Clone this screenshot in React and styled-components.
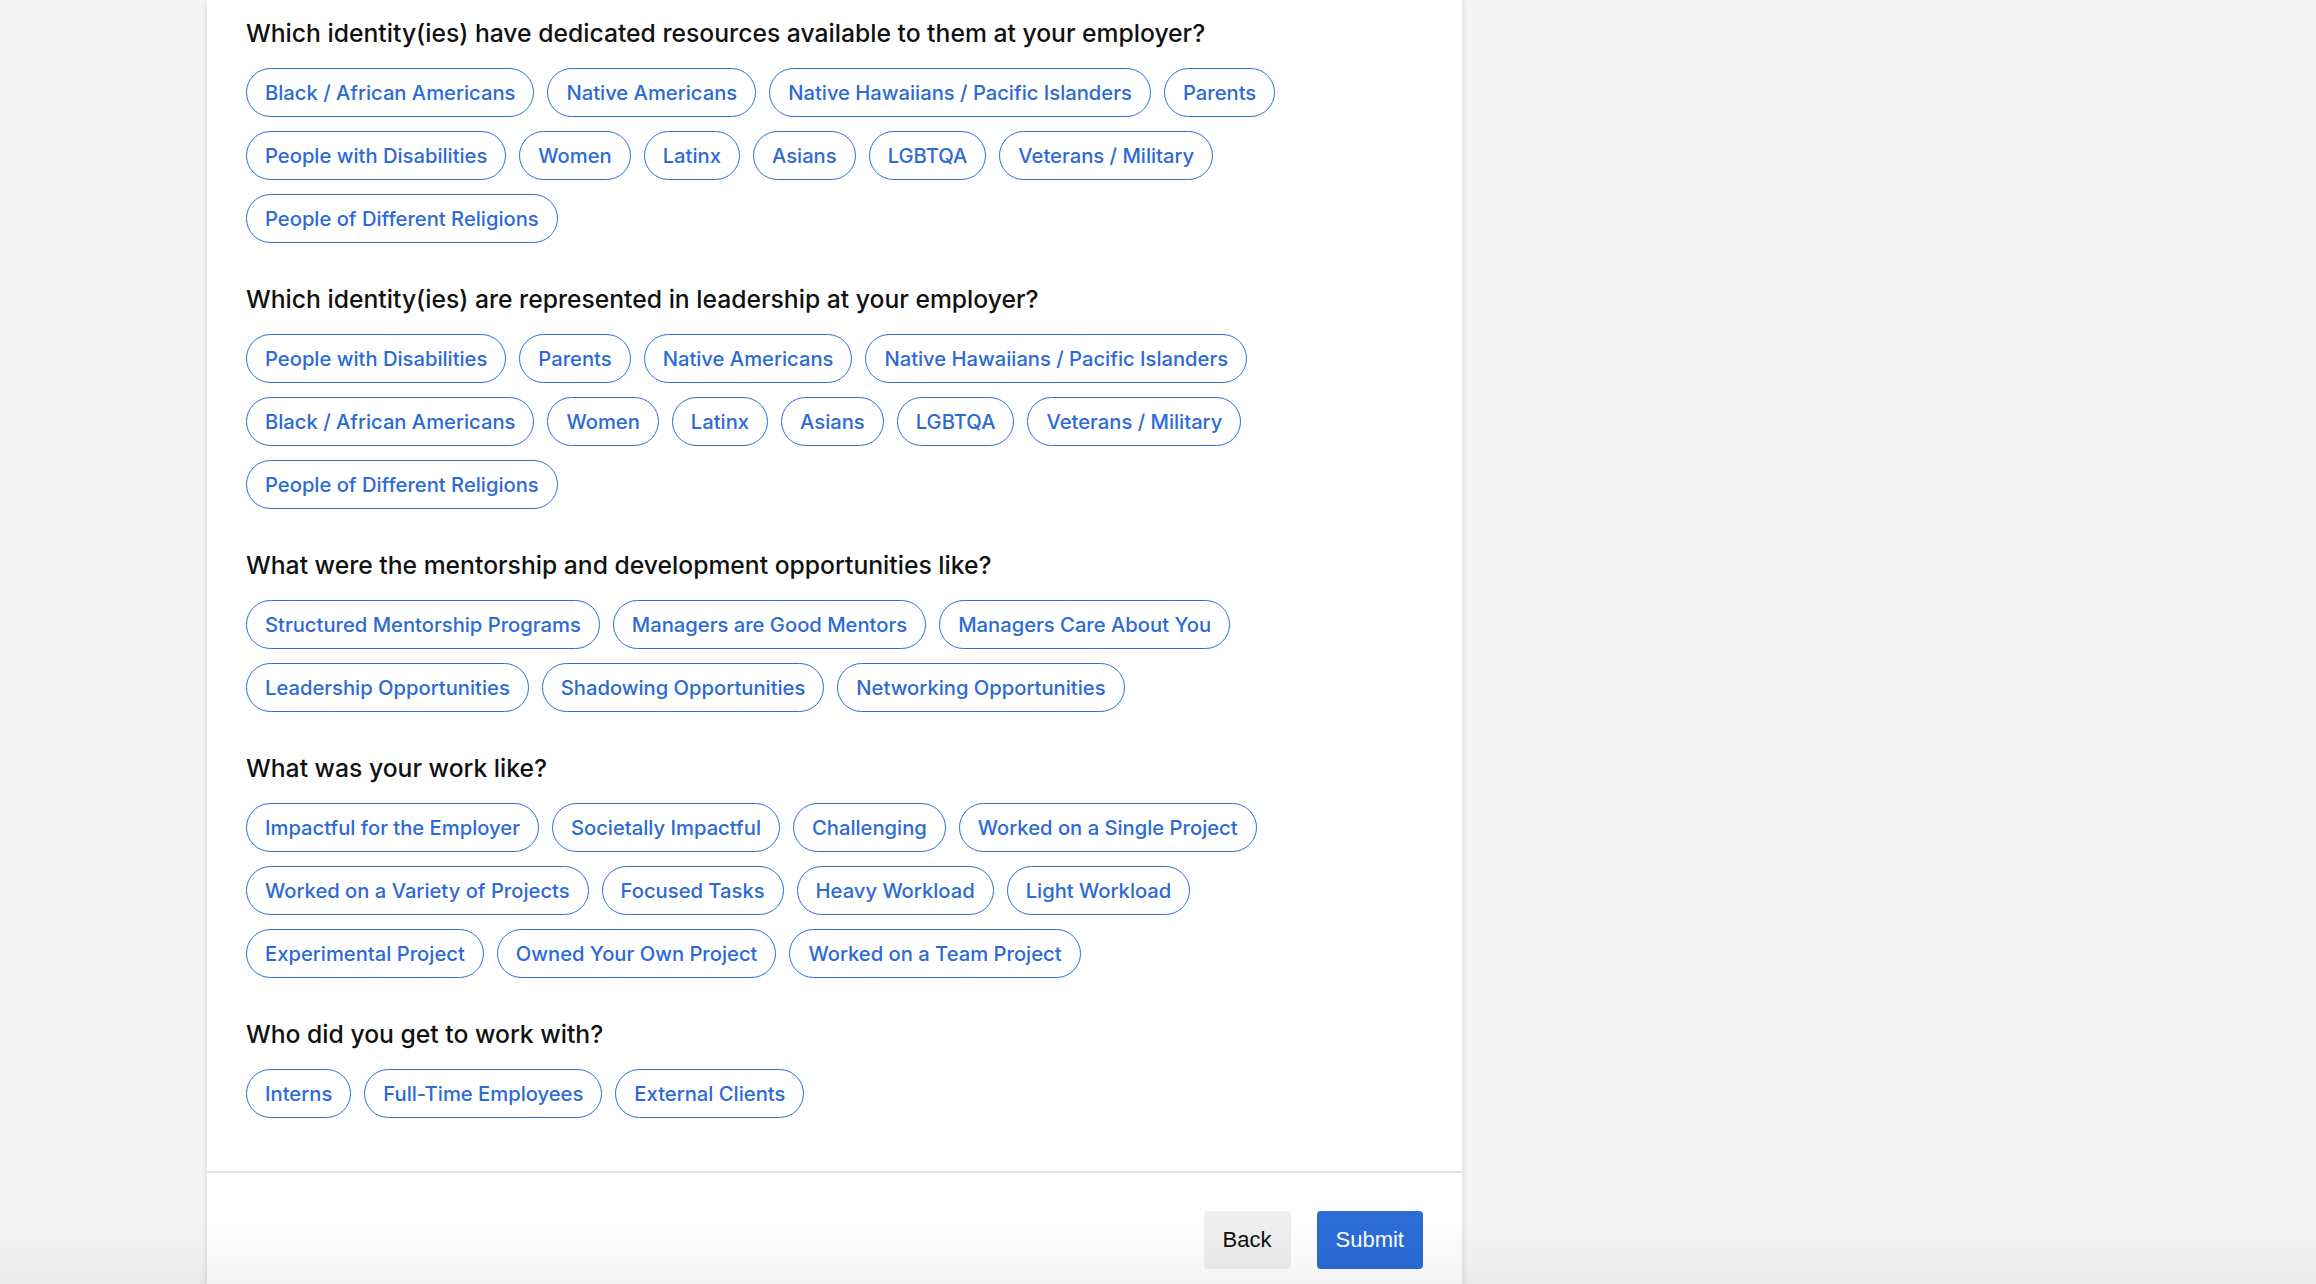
import React from "react";
import styled, { createGlobalStyle } from "styled-components";

const Global = createGlobalStyle`
  html, body { margin: 0; padding: 0; background: #f5f5f5; }
  body { font-family: Inter, "Liberation Sans", Arial, sans-serif; -webkit-font-smoothing: antialiased; }
  * { box-sizing: border-box; }
`;

const Page = styled.div`
  display: flex;
  padding-left: 207px;
  min-height: 100vh;
`;

const Card = styled.div`
  width: 1255px;
  background: #ffffff;
  box-shadow: 0 0 7px rgba(0, 0, 0, 0.13);
  display: flex;
  flex-direction: column;
`;

const Body = styled.div`
  padding: 15px 39px 53px 39px;
  display: flex;
  flex-direction: column;
  gap: 38px;
`;

const Section = styled.section`
  display: flex;
  flex-direction: column;
  gap: 17px;
`;

const Question = styled.h2`
  margin: 0;
  font-family: Inter, "Liberation Sans", Arial, sans-serif;
  font-size: 24.7px;
  line-height: 36px;
  font-weight: 500;
  color: #111111;
`;

const Chips = styled.div`
  display: flex;
  flex-wrap: wrap;
  column-gap: 13px;
  row-gap: 14px;
  max-width: 1170px;
`;

const Chip = styled.button`
  height: 49px;
  padding: 0 18px;
  border: 1px solid #2f6cd8;
  border-radius: 25px;
  background: #ffffff;
  color: #2c6ad6;
  font-family: Inter, "Liberation Sans", Arial, sans-serif;
  font-size: 20.2px;
  font-weight: 500;
  white-space: nowrap;
  cursor: pointer;
`;

const Footer = styled.div`
  border-top: 2px solid #e2e2e2;
  padding: 38px 39px 40px 39px;
  display: flex;
  justify-content: flex-end;
  gap: 26px;
`;

const Button = styled.button`
  height: 58px;
  padding: 0 19px;
  border: none;
  border-radius: 4px;
  font-family: "Liberation Sans", Arial, sans-serif;
  font-size: 22px;
  background: ${(p) => (p.$primary ? "#2c6cd8" : "#efefef")};
  color: ${(p) => (p.$primary ? "#ffffff" : "#111111")};
  cursor: pointer;
`;

const Fade = styled.div`
  position: fixed;
  left: 0;
  right: 0;
  bottom: 0;
  height: 64px;
  pointer-events: none;
  background: linear-gradient(rgba(0, 0, 0, 0), rgba(0, 0, 0, 0.045));
`;

const sections = [
  {
    q: "Which identity(ies) have dedicated resources available to them at your employer?",
    items: [
      "Black / African Americans",
      "Native Americans",
      "Native Hawaiians / Pacific Islanders",
      "Parents",
      "People with Disabilities",
      "Women",
      "Latinx",
      "Asians",
      "LGBTQA",
      "Veterans / Military",
      "People of Different Religions",
    ],
  },
  {
    q: "Which identity(ies) are represented in leadership at your employer?",
    items: [
      "People with Disabilities",
      "Parents",
      "Native Americans",
      "Native Hawaiians / Pacific Islanders",
      "Black / African Americans",
      "Women",
      "Latinx",
      "Asians",
      "LGBTQA",
      "Veterans / Military",
      "People of Different Religions",
    ],
  },
  {
    q: "What were the mentorship and development opportunities like?",
    items: [
      "Structured Mentorship Programs",
      "Managers are Good Mentors",
      "Managers Care About You",
      "Leadership Opportunities",
      "Shadowing Opportunities",
      "Networking Opportunities",
    ],
  },
  {
    q: "What was your work like?",
    items: [
      "Impactful for the Employer",
      "Societally Impactful",
      "Challenging",
      "Worked on a Single Project",
      "Worked on a Variety of Projects",
      "Focused Tasks",
      "Heavy Workload",
      "Light Workload",
      "Experimental Project",
      "Owned Your Own Project",
      "Worked on a Team Project",
    ],
  },
  {
    q: "Who did you get to work with?",
    items: ["Interns", "Full-Time Employees", "External Clients"],
  },
];

export default function App() {
  return (
    <>
      <Global />
      <Page>
        <Card>
          <Body>
            {sections.map((s) => (
              <Section key={s.q}>
                <Question>{s.q}</Question>
                <Chips>
                  {s.items.map((it) => (
                    <Chip key={it}>{it}</Chip>
                  ))}
                </Chips>
              </Section>
            ))}
          </Body>
          <Footer>
            <Button>Back</Button>
            <Button $primary>Submit</Button>
          </Footer>
        </Card>
      </Page>
      <Fade />
    </>
  );
}
